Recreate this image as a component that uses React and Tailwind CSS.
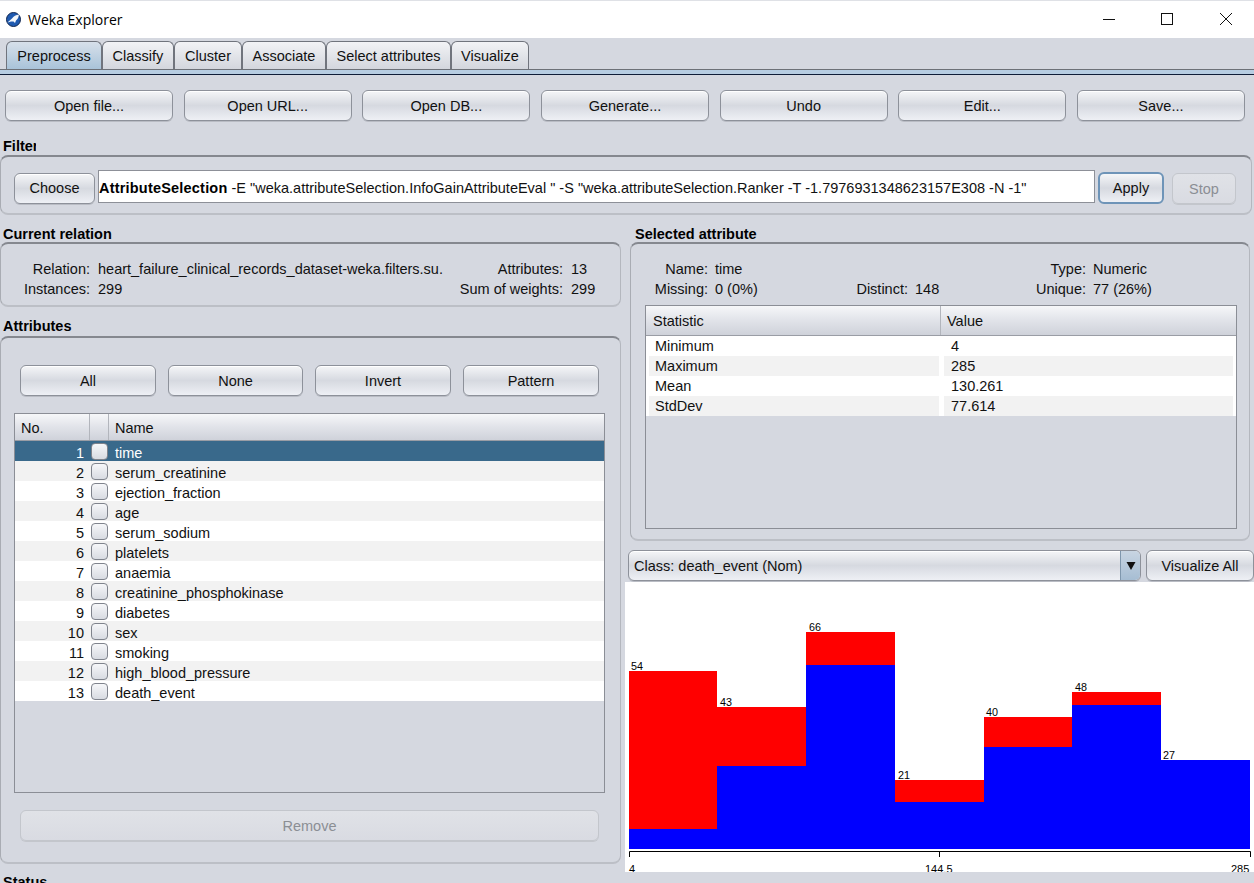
import React from "react";

const btnBase = "flex items-center justify-center pt-[2px] h-[31px] text-[14.5px]";
const btn = `${btnBase} rounded-[6px] border border-[#8d919a] bg-gradient-to-b from-[#f5f6f8] via-[#d6d9e0] to-[#eef0f5] text-[#111] shadow-[inset_0_1px_0_#fff,0_1px_0_#b9bcc4]`;
const disabled = `${btnBase} rounded-[6px] border border-[#c3c6cc] bg-gradient-to-b from-[#e0e2e7] to-[#d9dbe2] text-[#8b8e94] shadow-[0_1px_0_#c3c6cc]`;
const panel = "rounded-[8px] border border-[#c4c7ce] border-t-2 border-t-[#85888f] border-l-[#a9acb3] border-r-[#b4b7be] border-b-2 border-b-[#bcbfc6] bg-[#d5d8e0]";
const head = "bg-gradient-to-b from-[#f6f7f9] via-[#e1e3e9] to-[#cfd2da] text-[14.5px] text-[#111]";

const Label = ({ children, w, className = "" }) => (
  <div className={`h-[18px] overflow-hidden whitespace-nowrap text-[14.5px] leading-[18px] font-bold text-black ${className}`} style={{ width: w }}>{children}</div>
);

const Button = ({ children, className = "" }) => <div className={`${btn} ${className}`}>{children}</div>;

const tabs = [
  ["Preprocess", "w-[96px]"],
  ["Classify", "w-[72px]"],
  ["Cluster", "w-[68px]"],
  ["Associate", "w-[84px]"],
  ["Select attributes", "w-[125px]"],
  ["Visualize", "w-[78px]"],
];

const attrs = ["time", "serum_creatinine", "ejection_fraction", "age", "serum_sodium", "platelets", "anaemia", "creatinine_phosphokinase", "diabetes", "sex", "smoking", "high_blood_pressure", "death_event"];
const stats = [["Minimum", "4"], ["Maximum", "285"], ["Mean", "130.261"], ["StdDev", "77.614"]];

const bars = [
  { x: 629, w: 88, top: 671, red: 829, n: "54", lx: 631 },
  { x: 717, w: 89, top: 707, red: 766, n: "43", lx: 720 },
  { x: 806, w: 89, top: 632, red: 665, n: "66", lx: 809 },
  { x: 895, w: 89, top: 780, red: 802, n: "21", lx: 898 },
  { x: 984, w: 88, top: 717, red: 747, n: "40", lx: 986 },
  { x: 1072, w: 89, top: 692, red: 705, n: "48", lx: 1075 },
  { x: 1161, w: 89, top: 760, red: 760, n: "27", lx: 1163 },
];

function Chart() {
  const f = { fontFamily: "'Liberation Sans', Arial, sans-serif", fontSize: 11, fill: "#000" };
  return (
    <svg width="629" height="290" viewBox="625 582 629 290" className="block">
      <rect x="625" y="582" width="629" height="290" fill="#fff" />
      {bars.map((b) => (
        <g key={b.n}>
          <rect x={b.x} y={b.top} width={b.w} height={b.red - b.top} fill="#ff0000" />
          <rect x={b.x} y={b.red} width={b.w} height={849 - b.red} fill="#0000ff" />
          <text x={b.lx} y={b.top - 1} {...f} textLength="12" lengthAdjust="spacingAndGlyphs">{b.n}</text>
        </g>
      ))}
      <path d="M629.5 857V851.5H1250.5V857M939.5 851.5V857" fill="none" stroke="#000" strokeWidth="1" />
      <text x="629" y="873" {...f}>4</text>
      <text x="925" y="873" {...f}>144.5</text>
      <text x="1231" y="873" {...f}>285</text>
    </svg>
  );
}

function WekaIcon() {
  return (
    <svg width="15" height="15" viewBox="0 0 15 15">
      <circle cx="7.5" cy="7.5" r="7" fill="#1f5ab0" />
      <circle cx="7.5" cy="7.5" r="7" fill="none" stroke="#10264f" strokeWidth="1" />
      <path d="M1.5 10.5 L6 6.5 C7.5 4 10 3 13 2.5 C12.5 5 12 7 10 8.5 L9 11 L7.5 9.5 L5 9.5 Z" fill="#f4f7fb" />
    </svg>
  );
}

export default function App() {
  return (
    <div className="w-[1254px] h-[883px] overflow-hidden bg-[#d5d8e0] font-['Liberation_Sans',Arial,sans-serif] text-[#111]">
      {/* title bar */}
      <div className="h-[38px] flex items-center bg-white border-t border-t-[#dfe1e6] pl-[6px]">
        <WekaIcon />
        <span className="ml-[7px] text-[14px] text-black font-['Open_Sans',sans-serif] leading-none">Weka Explorer</span>
        <div className="ml-auto flex h-full items-center">
          <svg width="60" height="37" viewBox="0 0 60 37"><path d="M25 18.5H37" stroke="#111" fill="none" /></svg>
          <svg width="58" height="37" viewBox="0 0 58 37"><rect x="23.5" y="12.5" width="11" height="11" stroke="#111" fill="none" /></svg>
          <svg width="58" height="37" viewBox="0 0 58 37"><path d="M24 12L36 24M36 12L24 24" stroke="#111" fill="none" /></svg>
        </div>
      </div>

      {/* tabs */}
      <div className="h-[37px] relative pl-[6px] pt-[3px] border-b border-b-[#0f1d38]">
        <div className="flex h-[28px]">
          {tabs.map(([t, w], i) => (
            <div key={t} className={`${w} flex items-center justify-center pt-[2px] rounded-t-[6px] border border-[#70747d] border-b-0 text-[14.5px] ${i === 0 ? "bg-gradient-to-b from-[#d7e0ea] to-[#a9c3d9]" : "bg-gradient-to-b from-[#f2f3f6] to-[#d3d6dd]"}`}>{t}</div>
          ))}
        </div>
        <div className="h-[5px] -ml-[6px] border-t border-t-[#6d7178] bg-[#b7cde2]" />
      </div>

      {/* top buttons */}
      <div className="flex justify-between pl-[5px] pr-[9px] mt-[15px]">
        {["Open file...", "Open URL...", "Open DB...", "Generate...", "Undo", "Edit...", "Save..."].map((t) => (
          <Button key={t} className="w-[168px]">{t}</Button>
        ))}
      </div>

      {/* filter */}
      <Label w="33px" className="mt-[16px] ml-[3px]">Filter</Label>
      <div className={`${panel} h-[60px] w-[1252px] flex items-start pl-[13px] pt-[16px]`}>
        <Button className="w-[81px] pt-0!">Choose</Button>
        <div className="relative ml-[3px] -mt-[3px] h-[33px] w-[997px] bg-white border border-[#8d9098] text-[14.5px] leading-[35px] whitespace-nowrap overflow-hidden text-[#111]">
          <b className="text-black tracking-[0.2px]">AttributeSelection</b> -E "weka.attributeSelection.InfoGainAttributeEval " -S "weka.attributeSelection.Ranker -T -1.7976931348623157E308 -N -1"
        </div>
        <div className={`${btnBase} ml-[3px] -mt-[1px] w-[66px] h-[32px] rounded-[6px] border-2 border-[#6e94b8] bg-gradient-to-b from-[#f5f6f8] via-[#d6d9e0] to-[#eef0f5] text-[#111]`}>Apply</div>
        <div className={`${disabled} ml-[8px] w-[64px]`}>Stop</div>
      </div>

      {/* main */}
      <div className="flex mt-[9px]">
        <div className="w-[621px] shrink-0">
          <Label w="110px" className="ml-[3px] pt-[1px]">Current relation</Label>
          <div className={`${panel} h-[65px] text-[14.5px] leading-[20px]`}>
            <div className="grid grid-cols-[88px_360px_113px_auto] pt-[15px] pl-[1px]">
              <span className="text-right">Relation:</span>
              <span className="pl-[8px] whitespace-nowrap">heart_failure_clinical_records_dataset-weka.filters.su.</span>
              <span className="text-right">Attributes:</span>
              <span className="pl-[8px]">13</span>
              <span className="text-right">Instances:</span>
              <span className="pl-[8px]">299</span>
              <span className="text-right whitespace-nowrap">Sum of weights:</span>
              <span className="pl-[8px]">299</span>
            </div>
          </div>
          <Label w="120px" className="ml-[3px] mt-[10px]">Attributes</Label>
          <div className={`${panel} h-[528px] mt-[1px] px-[13px]`}>
            <div className="flex gap-[12px] pl-[6px] pt-[27px]">
              <Button className="w-[136px]">All</Button>
              <Button className="w-[135px]">None</Button>
              <Button className="w-[136px]">Invert</Button>
              <Button className="w-[136px]">Pattern</Button>
            </div>
            <div className="h-[380px] w-[591px] mt-[17px] border border-[#8b8e96] bg-[#d5d8e0]">
              <div className={`${head} h-[27px] flex border-b border-b-[#9a9da5] leading-[28px]`}>
                <div className="w-[75px] pl-[6px] border-r border-r-[#b2b5bc]">No.</div>
                <div className="w-[19px] border-r border-r-[#b2b5bc]" />
                <div className="pl-[6px]">Name</div>
              </div>
              {attrs.map((a, i) => (
                <div key={a} className={`h-[20px] flex items-start leading-[20px] text-[14.5px] ${i === 0 ? "bg-[#39698b] text-white" : i % 2 ? "bg-[#f2f2f2]" : "bg-white"}`}>
                  <span className="w-[69px] mt-[2px] text-right">{i + 1}</span>
                  <span className="ml-[7px] mt-[2px] w-[17px] h-[17px] rounded-[4px] border border-[#7f838c] bg-gradient-to-b from-[#f6f7f9] to-[#d8dbe2]" />
                  <span className="ml-[7px] mt-[2px]">{a}</span>
                </div>
              ))}
            </div>
            <div className={`${disabled} w-[579px] ml-[6px] mt-[17px]`}>Remove</div>
          </div>
          <Label w="120px" className="ml-[3px] mt-[9px]">Status</Label>
        </div>

        <div className="w-[633px] shrink-0">
          <Label w="200px" className="ml-[14px] pt-[1px]">Selected attribute</Label>
          <div className={`${panel} h-[299px] w-[620px] ml-[9px] px-[14px] text-[14.5px] leading-[20px]`}>
            <div className="grid grid-cols-[63px_110px_90px_65px_113px_auto] auto-rows-[20px] content-start pt-[15px] h-[60px]">
              <span className="text-right whitespace-nowrap">Name:</span><span className="pl-[7px]">time</span>
              <span /><span />
              <span className="text-right">Type:</span><span className="pl-[7px]">Numeric</span>
              <span className="text-right whitespace-nowrap">Missing:</span><span className="pl-[7px]">0 (0%)</span>
              <span className="text-right">Distinct:</span><span className="pl-[7px]">148</span>
              <span className="text-right">Unique:</span><span className="pl-[7px] whitespace-nowrap">77 (26%)</span>
            </div>
            <div className="h-[224px] w-[592px] mt-[1px] border border-[#8b8e96]">
              <div className={`${head} h-[30px] flex border-b border-b-[#9a9da5] leading-[30px]`}>
                <div className="w-[295px] pl-[7px] border-r border-r-[#b2b5bc]">Statistic</div>
                <div className="pl-[6px]">Value</div>
              </div>
              {stats.map(([k, v], i) => (
                <div key={k} className="h-[20px] flex px-[3px] bg-white leading-[21px]">
                  <span className={`w-[290px] pl-[6px] ${i % 2 ? "bg-[#f2f2f2]" : ""}`}>{k}</span>
                  <span className={`ml-[5px] flex-1 pl-[7px] ${i % 2 ? "bg-[#f2f2f2]" : ""}`}>{v}</span>
                </div>
              ))}
            </div>
          </div>
          <div className="flex h-[31px] mt-[9px] ml-[7px] text-[14.5px]">
            <div className={`${btn} w-[513px] justify-start! pl-[5px] relative overflow-hidden`}>
              Class: death_event (Nom)
              <div className="absolute right-0 top-0 bottom-0 w-[20px] border-l border-l-[#7f97ad] bg-gradient-to-b from-[#c8d5e2] to-[#a6bdd3] flex items-center justify-center">
                <svg width="10" height="8" viewBox="0 0 10 8"><path d="M0.5 0H9.5L5 8Z" fill="#111" /></svg>
              </div>
            </div>
            <Button className="ml-[5px] w-[108px]">Visualize All</Button>
          </div>
          <div className="mt-[1px] ml-[4px]"><Chart /></div>
        </div>
      </div>
    </div>
  );
}
